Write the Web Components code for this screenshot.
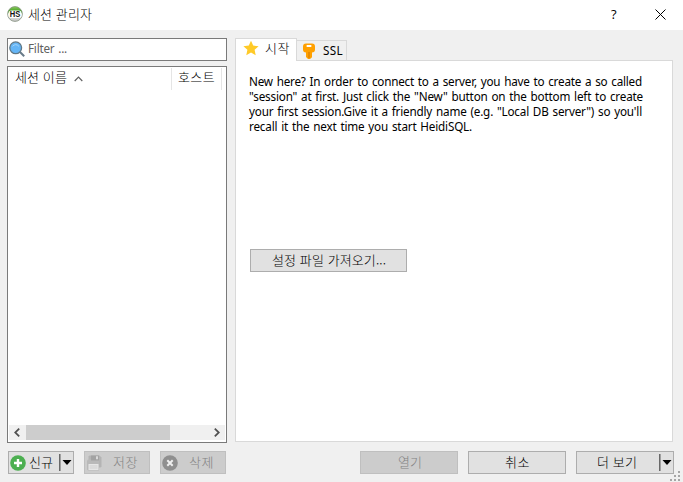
<!DOCTYPE html>
<html lang="ko">
<head>
<meta charset="utf-8">
<title>세션 관리자</title>
<style>
html,body{margin:0;width:683px;height:482px;overflow:hidden;background:#f0f0f0}
body{font:13px/15px "Noto Sans CJK KR","Noto Sans",sans-serif;font-weight:300;color:#000}
</style>
</head>
<body>
<session-manager></session-manager>
<script>
const define = (name, html, setup) => {
  const t = document.createElement('template');
  t.innerHTML = html;
  customElements.define(name, class extends HTMLElement {
    constructor() {
      super();
      this.attachShadow({mode: 'open'}).append(t.content.cloneNode(true));
    }
    connectedCallback() { if (setup) setup(this, this.shadowRoot); }
  });
};

// One line of text, tracked so that it spans the width given in "w".
define('ui-text', `<style>:host{display:block;flex:none;white-space:pre;line-height:15px;height:15px}span{display:inline-block}:host([latin]){font-family:"Noto Sans",sans-serif;font-size:11.7px;font-weight:400;word-spacing:1px}</style><span><slot></slot></span>`,
  (el, root) => {
    const w = +el.getAttribute('w'), n = el.textContent.length;
    if (!w) return;
    const natural = root.querySelector('span').getBoundingClientRect().width;
    el.style.letterSpacing = ((w - natural) / n).toFixed(3) + 'px';
    el.style.width = w + 'px';
  });

const icons = {
  app: `<svg width="16" height="16" viewBox="0 0 16 16"><defs><linearGradient id="g" x2="0" y2="1"><stop offset="0" stop-color="#8ccf5a"/><stop offset=".4" stop-color="#2f8f17"/><stop offset=".5" stop-color="#eee"/><stop offset="1" stop-color="#c5c5c5"/></linearGradient></defs><circle cx="8" cy="8" r="7.4" fill="url(#g)" stroke="#84907f" stroke-width=".8"/><rect x="1.4" y="4.4" width="13.2" height="7.6" rx="3" fill="#fff"/><text x="8" y="11.3" text-anchor="middle" textLength="10.5" lengthAdjust="spacingAndGlyphs" font-family="Liberation Sans" font-weight="700" font-size="9" fill="#111">HS</text></svg>`,
  search: `<svg width="16" height="16" viewBox="0 0 16 16"><path d="M11 11l4.2 4.2" stroke="#687b89" stroke-width="2"/><circle cx="6.7" cy="6.8" r="5.9" fill="#64b5f6" stroke="#607886" stroke-width="1.3"/><path d="M3.5 5.3Q6.7 2 9.9 5.3" fill="none" stroke="#a5d5fa"/></svg>`,
  star: `<svg width="16" height="16" viewBox="0 0 16 16"><path d="M8 .7l2.2 4.9 5.4.6-4 3.6 1.1 5.4L8 12.5l-4.7 2.7 1.1-5.4-4-3.6 5.4-.6z" fill="#ffca28"/></svg>`,
  key: `<svg width="16" height="16" viewBox="0 0 16 16"><path d="M5 .4h6q3 0 3 3v3q0 2.8-3 3v4.8L9 16H7l-2-2V9.4q-3-.2-3-3v-3q0-3 3-3z" fill="#ffa000"/><rect x="5.5" y="2" width="5" height="2" rx=".7" fill="#fff"/><path d="M8 9v6" stroke="#d67c05" stroke-width="1.2"/></svg>`,
  plus: `<svg width="16" height="16" viewBox="0 0 16 16"><circle cx="8" cy="8" r="7.8" fill="#4caf50"/><path d="M8 4v8M4 8h8" stroke="#fff" stroke-width="2.4"/></svg>`,
  save: `<svg width="16" height="16" viewBox="0 0 16 16"><path d="M3.5.5h10l2 2v9l-1 1h-11l-1-1v-10z" fill="#b4b4b4"/><path d="M2 4.5h11v11H2l-1-1v-9z" fill="#b9b9b9"/><path d="M5 .5h8v5H5z" fill="#a3a3a3"/><path d="M10 1.3h2v3h-2z" fill="#dadada"/><path d="M2.5 9h10v6h-10z" fill="#e6e6e6"/><path d="M3.5 11h8M3.5 13h8" stroke="#cfcfcf"/></svg>`,
  remove: `<svg width="16" height="16" viewBox="0 0 16 16"><circle cx="8" cy="8" r="7.8" fill="#8f8f8f"/><path d="M5.3 5.3l5.4 5.4m0-5.4l-5.4 5.4" stroke="#efefef" stroke-width="2"/></svg>`
};
define('ui-icon', `<style>:host{display:block;flex:none;width:16px;height:16px}svg{display:block}</style><div></div>`,
  (el, root) => root.querySelector('div').innerHTML = icons[el.getAttribute('name')]);

define('ui-button', `<style>
:host{display:flex;box-sizing:border-box;height:23px;border:1px solid #adadad;background:#e1e1e1;align-items:center;flex:none}
:host([disabled]){background:#ccc;border-color:#bfbfbf;color:#838383}
::slotted(ui-text){margin-top:-2px}
.drop{display:none;margin-left:auto;width:14px;height:17px;box-sizing:border-box;border-left:1px solid #696969;align-items:center;box-shadow:inset 1px 0 #a0a0a0}
:host([split]) .drop{display:flex}
svg{display:block;margin-left:2px}
</style><slot></slot><div class="drop"><svg width="10" height="5"><path d="M.5 0h9L5 5z"/></svg></div>`);

define('ui-tab', `<style>
:host{display:flex;box-sizing:border-box;border:1px solid #d9d9d9;border-bottom:0;background:#f0f0f0;align-items:center;height:20px;width:50px;border-left:0}
:host([active]){height:23px;width:62px;background:#fff;border-left:1px solid #d9d9d9;margin-bottom:-1px}
</style><slot></slot>`);

define('title-bar', `<style>
:host{display:flex;height:30px;background:#fff;align-items:center;box-sizing:border-box;padding-left:7px}
.help{margin:-1px 0 0 519px;font:13px/15px "Open Sans",sans-serif;width:8px}
svg{margin:-1px 0 0 36px}
ui-text{margin:-4px 0 0 5px}ui-icon{margin-top:-2px}
</style><ui-icon name="app"></ui-icon><ui-text w="64">세션 관리자</ui-text><span class="help">?</span><svg width="11" height="11"><path d="M.5.5l10 10m0-10l-10 10" stroke="#000"/></svg>`);

define('filter-box', `<style>:host{display:flex;box-sizing:border-box;height:23px;border:1px solid #7a7a7a;background:#fff;padding:2px 1px;color:#606060}ui-text{margin:0 0 0 3px}</style>
<ui-icon name="search"></ui-icon><ui-text latin w="39">Filter ...</ui-text>`);

define('session-list', `<style>
:host{display:flex;flex-direction:column;box-sizing:border-box;height:377px;border:1px solid #7a7a7a;background:#fff;padding:1px}
.head{display:flex;height:22px}
.c{display:flex;box-sizing:border-box;border-right:1px solid #e5e5e5;padding:1px 0 0 6px}
.a{width:163px}.b{width:50px}
.a svg{margin:7px 0 0 7px}
.bar{display:flex;margin-top:auto;height:15px;background:#f0f0f0;align-items:center;margin-bottom:1px}
.thumb{width:144px;height:15px;background:#cdcdcd;margin:0 44px 0 6px}
.bar svg{margin-left:5px}.bar svg:last-child{margin:0}
</style><div class="head"><div class="c a"><ui-text w="52">세션 이름</ui-text><svg width="9" height="6"><path d="M.7 5l3.8-3.8L8.3 5" fill="none" stroke="#606060" stroke-width="1.2"/></svg></div><div class="c b"><ui-text w="37">호스트</ui-text></div></div>
<div class="bar"><svg width="6" height="9"><path d="M5.2.7L1.2 4.5l4 3.8" fill="none" stroke="#505050" stroke-width="1.8"/></svg><div class="thumb"></div><svg width="6" height="9"><path d="M.8.7l4 3.8-4 3.8" fill="none" stroke="#505050" stroke-width="1.8"/></svg></div>`);

define('start-page', `<style>
:host{display:block;box-sizing:border-box;height:382px;width:438px;border:1px solid #d9d9d9;background:#fff;padding:13px 0 0 13px}
ui-button{width:157px;margin:115px 0 0 1px;padding-left:21px}
</style><ui-text latin w="393">New here? In order to connect to a server, you have to create a so called</ui-text><ui-text latin w="394">"session" at first. Just click the "New" button on the bottom left to create</ui-text><ui-text latin w="393">your first session.Give it a friendly name (e.g. "Local DB server") so you'll</ui-text><ui-text latin w="223">recall it the next time you start HeidiSQL.</ui-text>
<ui-button><ui-text w="114">설정 파일 가져오기...</ui-text></ui-button>`);

define('size-grip', `<style>:host{display:block;position:absolute;right:2px;bottom:1px;width:11px;height:10px}svg{display:block}</style><svg width="11" height="10" fill="#a6a6a6"><path d="M8 0h2v2H8zM4 4h2v2H4zM8 4h2v2H8zM0 8h2v2H0zM4 8h2v2H4zM8 8h2v2H8z"/></svg>`);

define('session-manager', `<style>
:host{display:block;position:relative;width:683px;height:482px}
.main{display:flex;gap:8px;padding:8px 0 0 7px;height:405px;box-sizing:content-box}
.left{width:220px;display:flex;flex-direction:column;gap:5px}
.tabs{display:flex;align-items:flex-end;height:22px;position:relative}
.right{width:438px}
.foot{display:flex;padding:8px 0 0 8px;gap:10px}
.foot ui-button{width:98px}.foot .s{width:66px}
.gap{width:114px}
ui-icon{margin-left:1px}
</style><title-bar></title-bar>
<div class="main"><div class="left"><filter-box></filter-box><session-list></session-list></div>
<div class="right"><div class="tabs"><ui-tab active><ui-icon name="star" style="margin:-4px 6px 0 7px"></ui-icon><ui-text w="25" style="margin-top:-5px">시작</ui-text></ui-tab><ui-tab><ui-icon name="key" style="margin:0 6px 0 4px"></ui-icon><ui-text latin w="20">SSL</ui-text></ui-tab></div><start-page></start-page></div></div>
<div class="foot">
<ui-button class="s" split><ui-icon name="plus"></ui-icon><ui-text w="24" style="margin-left:3px">신규</ui-text></ui-button>
<ui-button class="s" disabled><ui-icon name="save"></ui-icon><ui-text w="25" style="margin-left:11px">저장</ui-text></ui-button>
<ui-button class="s" disabled><ui-icon name="remove"></ui-icon><ui-text w="25" style="margin-left:11px">삭제</ui-text></ui-button>
<div class="gap"></div>
<ui-button disabled><ui-text w="24" style="margin-left:37px">열기</ui-text></ui-button>
<ui-button><ui-text w="25" style="margin-left:36px">취소</ui-text></ui-button>
<ui-button split><ui-text w="40" style="margin-left:20px">더 보기</ui-text></ui-button>
</div><size-grip></size-grip>`);
</script>
</body>
</html>
